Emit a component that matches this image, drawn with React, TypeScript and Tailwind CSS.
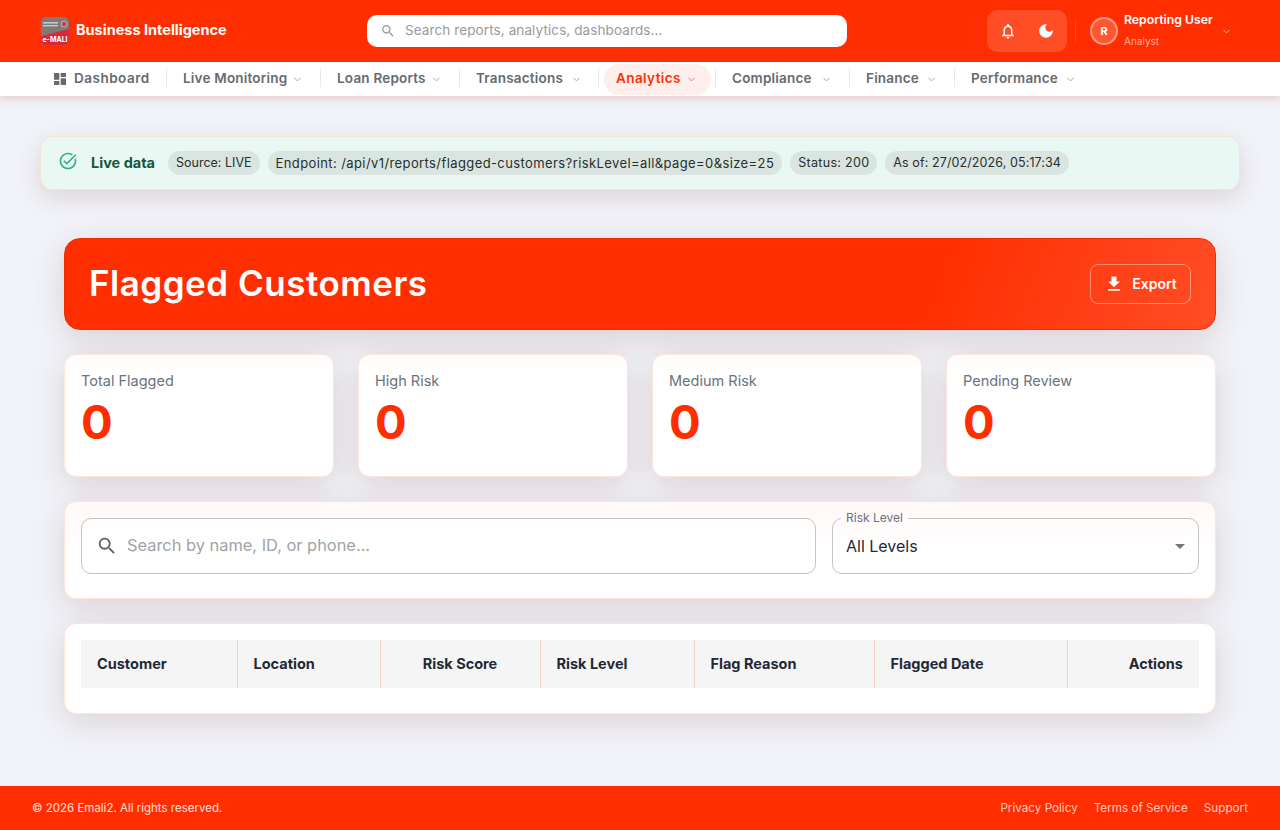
import { ChevronDown } from 'lucide-react';

const PATHS = {
  dashboard: 'M3 13h8V3H3v10zm0 8h8v-6H3v6zm10 0h8V11h-8v10zm0-18v6h8V3h-8z',
  search: 'M15.5 14h-.79l-.28-.27C15.41 12.59 16 11.11 16 9.5 16 5.91 13.09 3 9.5 3S3 5.91 3 9.5 5.91 16 9.5 16c1.61 0 3.09-.59 4.23-1.57l.27.28v.79l5 4.99L20.49 19l-4.99-5zm-6 0C7.01 14 5 11.99 5 9.5S7.01 5 9.5 5 14 7.01 14 9.5 11.99 14 9.5 14z',
  bell: 'M12 22c1.1 0 2-.9 2-2h-4c0 1.1.9 2 2 2zm6-6v-5c0-3.07-1.63-5.64-4.5-6.32V4c0-.83-.67-1.5-1.5-1.5s-1.5.67-1.5 1.5v.68C7.64 5.36 6 7.92 6 11v5l-2 2v1h16v-1l-2-2zm-2 1H8v-6c0-2.48 1.51-4.5 4-4.5s4 2.02 4 4.5v6z',
  moon: 'M12 3c-4.97 0-9 4.03-9 9s4.03 9 9 9 9-4.03 9-9c0-.46-.04-.92-.1-1.36-.98 1.37-2.58 2.26-4.4 2.26-2.98 0-5.4-2.42-5.4-5.4 0-1.81.89-3.42 2.26-4.4-.44-.06-.9-.1-1.36-.1z',
  download: 'M5 20h14v-2H5v2zM19 9h-4V3H9v6H5l7 7 7-7z',
  check: 'M22 5.18 10.59 16.6l-4.24-4.24 1.41-1.41 2.83 2.83 10-10L22 5.18zm-2.21 5.04c.13.57.21 1.17.21 1.78 0 4.42-3.58 8-8 8s-8-3.58-8-8 3.58-8 8-8c1.58 0 3.04.46 4.28 1.25l1.44-1.44C16.1 2.67 14.13 2 12 2 6.48 2 2 6.48 2 12s4.48 10 10 10 10-4.48 10-10c0-1.19-.22-2.33-.6-3.39l-1.61 1.61z',
};

function Icon({ d, className }: { d: string; className?: string }) {
  return (
    <svg viewBox="0 0 24 24" fill="currentColor" className={className}>
      <path d={d} />
    </svg>
  );
}

function Logo() {
  return (
    <svg viewBox="0 0 28 28" className="w-[28px] h-[28px]">
      <rect width="28" height="28" rx="5" fill="#7d7a79" />
      <path d="M0 19 L28 12 V23 a5 5 0 0 1 -5 5 H5 a5 5 0 0 1 -5 -5z" fill="#d8293a" />
      <rect x="2" y="5" width="15" height="1.6" fill="#c9c9c9" />
      <rect x="2" y="8" width="15" height="1.4" fill="#c9c9c9" />
      <circle cx="23" cy="7" r="3" fill="#c9434c" stroke="#ddd" strokeWidth="0.7" />
      <text x="14" y="25" textAnchor="middle" fontSize="7" fontWeight="700" fill="#fff" fontFamily="Inter, sans-serif">e-MALI</text>
    </svg>
  );
}

const NAV = [
  { label: 'Live Monitoring', w: 'w-[154px]', gap: 'w-[109px]' },
  { label: 'Loan Reports', w: 'w-[139px]', gap: 'w-[94px]' },
  { label: 'Transactions', w: 'w-[139px]', gap: 'w-[95px]' },
  { label: 'Analytics', w: 'w-[117px]', gap: 'w-[70px]', active: true },
  { label: 'Compliance', w: 'w-[134px]', gap: 'w-[89px]' },
  { label: 'Finance', w: 'w-[105px]', gap: 'w-[60px]' },
  { label: 'Performance', w: 'w-[140px]', gap: 'w-[94px]', last: true },
];

function NavItem({ item }: { item: (typeof NAV)[number] }) {
  return (
    <div className={`${item.w} h-full flex items-center relative ${item.active ? 'pl-[17px]' : 'pl-[16px]'}`}>
      {!item.last && <span className="absolute right-0 top-[7px] h-[18px] w-px bg-[#e8e8e8]" />}
      {item.active && <span className="absolute left-[5px] top-[2px] h-[31px] w-[107px] rounded-full bg-[#ffefec]" />}
      <span className={`relative ${item.gap} mb-[1px] text-[13.5px] font-semibold whitespace-nowrap ${item.active ? 'text-[#ff2e00] font-bold tracking-[0.4px]' : 'text-[#666a70] tracking-[0.2px]'}`}>
        {item.label}
      </span>
      <ChevronDown className={`relative w-[11px] h-[11px] ${item.active ? 'text-[#ff6a4d]' : 'text-[#9a9a9a]'}`} />
    </div>
  );
}

function Chip({ children, className }: { children: string; className?: string }) {
  return (
    <span className={`h-[24px] px-[8px] rounded-full bg-[#dae5e1] text-[#26302d] leading-[24px] whitespace-nowrap ${className ?? 'text-[12.5px]'}`}>
      {children}
    </span>
  );
}

function Stat({ label }: { label: string }) {
  return (
    <div className="h-[123px] rounded-[12px] border border-[#ffe3dc] bg-[linear-gradient(180deg,#fffbfa_0%,#ffffff_15%)] shadow-[0_8px_32px_rgba(100,30,30,0.15)] px-[16px] pt-[15px]">
      <div className="text-[14.5px] leading-[21px] text-[#6b7280]">{label}</div>
      <div className="text-[47px] leading-[58px] font-bold text-[#ff2e00] mt-[2px]">0</div>
    </div>
  );
}

const COLUMNS = [
  { label: 'Customer', w: 'w-[156px]', align: 'text-left' },
  { label: 'Location', w: 'w-[143px]', align: 'text-left' },
  { label: 'Risk Score', w: 'w-[160px]', align: 'text-center' },
  { label: 'Risk Level', w: 'w-[154px]', align: 'text-left' },
  { label: 'Flag Reason', w: 'w-[180px]', align: 'text-left' },
  { label: 'Flagged Date', w: 'w-[193px]', align: 'text-left' },
  { label: 'Actions', w: 'w-[132px]', align: 'text-right' },
];

export default function App() {
  return (
    <div className="min-h-[830px] flex flex-col bg-[#f1f3f8] font-['Inter',sans-serif] overflow-hidden">
      {/* Header */}
      <header className="h-[62px] shrink-0 bg-[#ff2e00] flex items-center pl-[41px] pr-[48px] text-white">
        <div className="w-[326px] flex items-center gap-[7px]">
          <Logo />
          <span className="text-[14.5px] font-bold whitespace-nowrap mb-[2px]">Business Intelligence</span>
        </div>
        <div className="w-[480px] h-[32px] rounded-[10px] bg-white flex items-center pl-[13px] gap-[9px]">
          <Icon d={PATHS.search} className="w-[16px] h-[16px] text-[#9d9d9d]" />
          <span className="mb-[1px] text-[13.5px] text-[#9a9a9a] tracking-[0.1px]">Search reports, analytics, dashboards...</span>
        </div>
        <div className="ml-[140px] w-[80px] h-[42px] rounded-[10px] bg-white/15 flex items-center justify-center gap-[20px]">
          <Icon d={PATHS.bell} className="w-[18px] h-[18px]" />
          <Icon d={PATHS.moon} className="w-[18px] h-[18px]" />
        </div>
        <div className="w-px h-[24px] bg-white/15 ml-[8px]" />
        <div className="ml-[14px] w-[28px] h-[28px] rounded-full bg-white/20 border-2 border-white/40 flex items-center justify-center text-[11px] font-bold">R</div>
        <div className="ml-[6px] w-[97px] flex flex-col mb-[4px]">
          <span className="text-[12.25px] leading-[18px] font-semibold whitespace-nowrap">Reporting User</span>
          <span className="text-[10px] leading-[14px] mt-[5px] text-white/60">Analyst</span>
        </div>
        <ChevronDown className="w-[11px] h-[11px] text-white/70" />
      </header>

      {/* Nav */}
      <nav className="h-[34px] shrink-0 bg-white shadow-[0_2px_8px_rgba(190,60,40,0.25)] flex items-center pl-[54px] relative">
        <div className="w-[113px] h-full flex items-center relative">
          <Icon d={PATHS.dashboard} className="w-[16px] h-[16px] -ml-[2px] text-[#666a70]" />
          <span className="ml-[6px] mb-[1px] text-[13.5px] font-semibold tracking-[0.5px] text-[#666a70]">Dashboard</span>
          <span className="absolute right-0 top-[7px] h-[18px] w-px bg-[#e8e8e8]" />
        </div>
        {NAV.map(item => (
          <NavItem key={item.label} item={item} />
        ))}
      </nav>

      <main className="flex-1 px-[40px] pt-[40px]">
        {/* Live data */}
        <div className="h-[54px] rounded-[12px] border border-[#f3e5da] bg-[#e9f8f2] shadow-[0_8px_24px_rgba(100,30,30,0.14)] flex items-center pl-[17px]">
          <Icon d={PATHS.check} className="w-[20px] h-[20px] -mt-[4px] text-[#2bb583]" />
          <span className="ml-[13px] mr-[13px] text-[14.5px] font-bold text-[#155740]">Live data</span>
          <div className="flex gap-[8px]">
            <Chip>Source: LIVE</Chip>
            <Chip className="text-[13px] tracking-[0.4px]">Endpoint: /api/v1/reports/flagged-customers?riskLevel=all&amp;page=0&amp;size=25</Chip>
            <Chip className="text-[12.5px] tracking-[0.3px]">Status: 200</Chip>
            <Chip className="text-[12.5px] tracking-[0.1px]">As of: 27/02/2026, 05:17:34</Chip>
          </div>
        </div>

        <div className="mx-[24px] mt-[48px] flex flex-col">
          {/* Title */}
          <div className="h-[92px] rounded-[16px] border border-[#f02c00] bg-[linear-gradient(110deg,#ff2e00_74%,#ff4d26_100%)] shadow-[0_8px_32px_rgba(100,30,30,0.16)] flex items-center justify-between pl-[24px] pr-[24px]">
            <h1 className="mb-[2px] text-[35px] font-semibold text-white tracking-[0.5px]">Flagged Customers</h1>
            <button className="w-[101px] h-[40px] rounded-[8px] border border-white/40 flex items-center justify-center gap-[8px] pb-[1px] text-white text-[14px] font-semibold">
              <Icon d={PATHS.download} className="w-[20px] h-[20px]" />
              Export
            </button>
          </div>

          {/* Stats */}
          <div className="mt-[24px] grid grid-cols-4 gap-[24px]">
            <Stat label="Total Flagged" />
            <Stat label="High Risk" />
            <Stat label="Medium Risk" />
            <Stat label="Pending Review" />
          </div>

          {/* Filters */}
          <div className="mt-[24px] h-[98px] rounded-[12px] border border-[#ffe3dc] bg-[linear-gradient(180deg,#fff8f6_0%,#ffffff_45%)] shadow-[0_8px_32px_rgba(100,30,30,0.15)] px-[16px] pt-[16px] flex gap-[16px]">
            <div className="w-[735px] h-[56px] rounded-[10px] border border-[#c4c4c4] flex items-center pl-[14px] gap-[9px] bg-white/60">
              <Icon d={PATHS.search} className="w-[22px] h-[22px] text-[#666]" />
              <span className="mb-[1px] text-[16.4px] text-[#a0a3a8]">Search by name, ID, or phone...</span>
            </div>
            <fieldset className="flex-1 h-[62px] -mt-[6px] rounded-[10px] border border-[#c4c4c4] pl-[8px] pr-[14px] relative">
              <legend className="px-[5px] text-[12px] leading-[12px] text-[#6b7280]">Risk Level</legend>
              <div className="flex items-center justify-between pl-[5px] h-[44px]">
                <span className="mb-[1px] text-[16px] text-[#1f2937]">All Levels</span>
                <span className="w-0 h-0 border-l-[5px] border-r-[5px] border-t-[5px] border-l-transparent border-r-transparent border-t-[#757575] mr-[-1px]" />
              </div>
            </fieldset>
          </div>

          {/* Table */}
          <div className="mt-[24px] h-[91px] rounded-[12px] border border-[#ffe3dc] bg-white shadow-[0_8px_32px_rgba(100,30,30,0.15)] p-[16px]">
            <table className="w-full table-fixed border-collapse">
              <thead>
                <tr className="h-[48px] bg-[#f5f5f5]">
                  {COLUMNS.map((col, i) => (
                    <th
                      key={col.label}
                      className={`${col.w} ${col.align} px-[16px] text-[14.5px] font-bold text-[#1f2937] whitespace-nowrap ${i < COLUMNS.length - 1 ? 'border-r border-[#f6cfc6]' : ''}`}
                    >
                      {col.label}
                    </th>
                  ))}
                </tr>
              </thead>
            </table>
          </div>
        </div>
      </main>

      <footer className="h-[44px] shrink-0 bg-[#ff2e00] flex items-center justify-between pl-[32px] pr-[32px] pt-[1px] text-white/80">
        <span className="text-[11.5px] text-white/85">© 2026 Emali2. All rights reserved.</span>
        <div className="flex gap-[16px] text-[11.7px] text-white/75">
          <span>Privacy Policy</span>
          <span>Terms of Service</span>
          <span>Support</span>
        </div>
      </footer>
    </div>
  );
}
